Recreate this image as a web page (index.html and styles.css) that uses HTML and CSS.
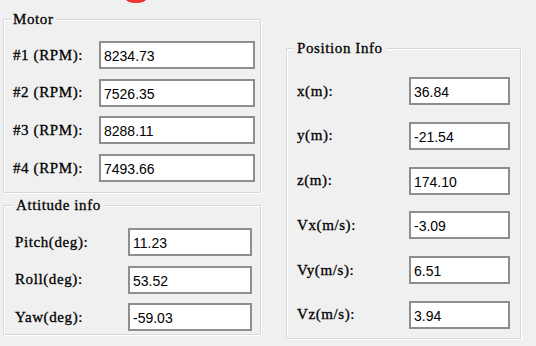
FILE: index.html
```html
<!DOCTYPE html>
<html lang="en">
<head>
    <meta charset="UTF-8">
    <meta name="viewport" content="width=device-width, initial-scale=1.0">
    <title>Drone Telemetry</title>
    <link rel="stylesheet" href="styles.css">
</head>
<body>
    <div class="led"></div>
    <div class="panel">
        <div class="left">
            <fieldset class="group motor">
                <legend>Motor</legend>
                <div class="row"><label>#1 (RPM):</label><input type="text" value="8234.73" readonly></div>
                <div class="row"><label>#2 (RPM):</label><input type="text" value="7526.35" readonly></div>
                <div class="row"><label>#3 (RPM):</label><input type="text" value="8288.11" readonly></div>
                <div class="row"><label>#4 (RPM):</label><input type="text" value="7493.66" readonly></div>
            </fieldset>
            <fieldset class="group attitude">
                <legend>Attitude info</legend>
                <div class="row"><label>Pitch(deg):</label><input type="text" value="11.23" readonly></div>
                <div class="row"><label>Roll(deg):</label><input type="text" value="53.52" readonly></div>
                <div class="row"><label>Yaw(deg):</label><input type="text" value="-59.03" readonly></div>
            </fieldset>
        </div>
        <fieldset class="group position">
            <legend>Position Info</legend>
            <div class="row"><label>x(m):</label><input type="text" value="36.84" readonly></div>
            <div class="row"><label>y(m):</label><input type="text" value="-21.54" readonly></div>
            <div class="row"><label>z(m):</label><input type="text" value="174.10" readonly></div>
            <div class="row"><label>Vx(m/s):</label><input type="text" value="-3.09" readonly></div>
            <div class="row"><label>Vy(m/s):</label><input type="text" value="6.51" readonly></div>
            <div class="row"><label>Vz(m/s):</label><input type="text" value="3.94" readonly></div>
        </fieldset>
    </div>
</body>
</html>
```

FILE: styles.css
```css
body {
    margin: 0;
    background: #f0f0f0;
    color: #000;
    font-family: "Liberation Serif", serif;
    height: 346px;
    overflow: hidden;
}

.led {
    position: absolute;
    left: 125px;
    top: -8px;
    width: 22px;
    height: 11px;
    border-radius: 50%;
    background: radial-gradient(circle at 50% 40%, #ff5050, #e01010);
}

.panel {
    display: grid;
    grid-template-columns: 258px 235px;
    column-gap: 25px;
    padding-left: 3px;
}

.left {
    display: flex;
    flex-direction: column;
    gap: 5px;
    padding-top: 12px;
}

.group {
    margin: 0;
    min-width: 0;
    padding-left: 0;
    padding-right: 0;
    border: 1px solid #d8d8d8;
    box-shadow: inset 1px 1px 0 #fff, 1px 1px 0 #fff;
    display: flex;
    flex-direction: column;
}

.group legend {
    padding: 0 3px;
    line-height: 14px;
    font-size: 15px;
    letter-spacing: 0.6px;
    -webkit-text-stroke: 0.3px #000;
    background: #f0f0f0;
}

.row {
    display: flex;
    justify-content: space-between;
    align-items: center;
}

.row label {
    font-size: 15px;
    letter-spacing: 0.6px;
    -webkit-text-stroke: 0.3px #000;
}

.row input {
    box-sizing: border-box;
    height: 28px;
    margin: 0;
    padding: 2px 0 0 3px;
    border: 2px solid #8e8e8e;
    background: #fff;
    font-family: "Liberation Sans", sans-serif;
    font-size: 14px;
    color: #000;
    outline: none;
}

.motor {
    padding-top: 15px;
    padding-bottom: 10px;
    gap: 9.7px;
}

.motor legend {
    margin-left: 6px;
}

.motor .row {
    padding: 0 5px 0 9px;
}

.motor input {
    width: 156px;
}

.attitude {
    padding-top: 16px;
    padding-bottom: 3px;
    gap: 9.5px;
}

.attitude legend {
    margin-left: 9px;
}

.attitude .row {
    padding: 0 8px 0 11px;
}

.attitude input {
    width: 124px;
}

.position {
    align-self: start;
    margin-top: 41px;
    padding-top: 22px;
    padding-bottom: 9px;
    gap: 16.8px;
}

.position legend {
    margin-left: 7px;
}

.position .row {
    padding: 0 10px;
}

.position input {
    width: 101px;
}
```
